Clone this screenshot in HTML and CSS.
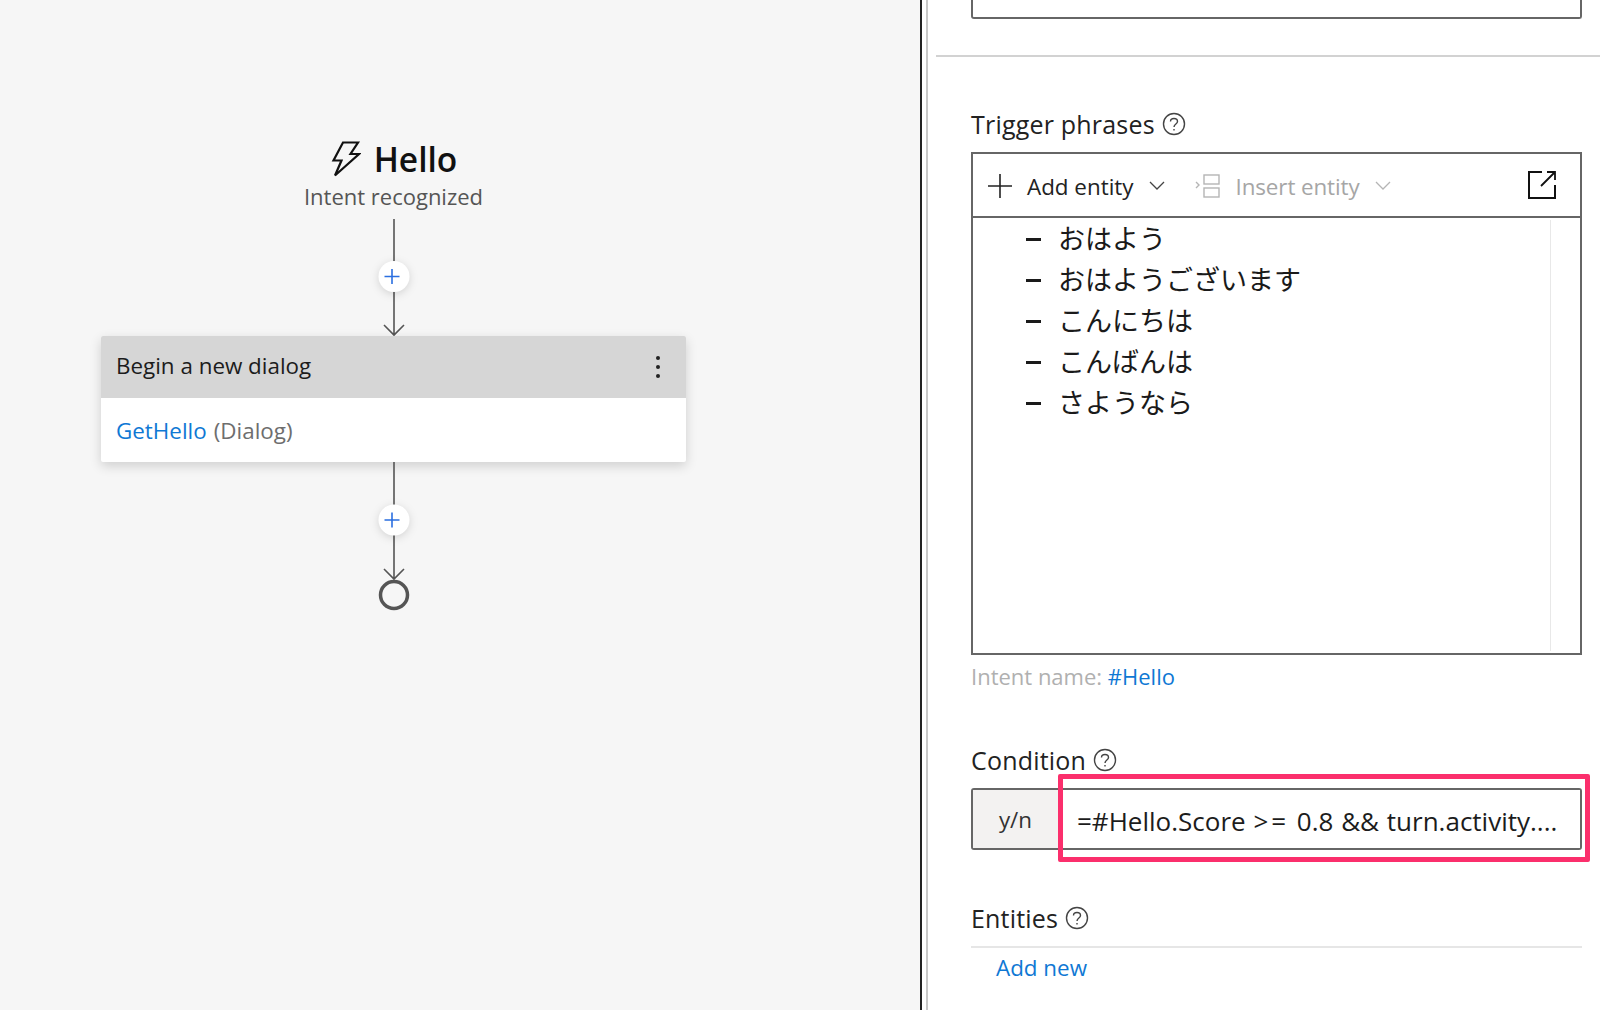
FILE: index.html
```html
<!DOCTYPE html>
<html lang="en">
<head>
<meta charset="utf-8">
<title>Trigger phrases</title>
<link rel="stylesheet" href="styles.css">
</head>
<body>
<main class="app">
  <section class="canvas">
    <div class="flow">
      <header class="trigger">
        <div class="trigger-title">
          <svg class="bolt" viewBox="0 0 30 36" width="30" height="36"><path d="M12 1.5H27L19.5 13H28L4 34.5L10.5 19.5H2.5Z" fill="none" stroke="#111" stroke-width="2.2" stroke-linejoin="miter"/></svg>
          <span>Hello</span>
        </div>
        <div class="trigger-sub">Intent recognized</div>
      </header>
      <svg class="edge edge-top" viewBox="0 0 40 117" width="40" height="117">
        <path d="M20 0V116M10 106L20 116L30 106" fill="none" stroke="#555" stroke-width="1.6"/>
        <circle class="add-dot" cx="20" cy="57.5" r="15.5" fill="#fff"/>
        <path d="M10.500 57.500H25.500M18 50V65" stroke="#2b6fe0" stroke-width="1.6"/>
      </svg>
      <article class="card">
        <div class="card-head">
          <span>Begin a new dialog</span>
          <svg viewBox="0 0 6 24" width="6" height="24"><circle cx="3" cy="3" r="2"/><circle cx="3" cy="12" r="2"/><circle cx="3" cy="21" r="2"/></svg>
        </div>
        <div class="card-body"><span class="link">GetHello</span> <span class="muted">(Dialog)</span></div>
      </article>
      <svg class="edge edge-bottom" viewBox="0 0 40 150" width="40" height="150">
        <path d="M20 0V117M10 107L20 117L30 107" fill="none" stroke="#555" stroke-width="1.6"/>
        <circle class="add-dot" cx="20" cy="58" r="15.5" fill="#fff"/>
        <path d="M10.500 58H25.500M18 50.500V65.500" stroke="#2b6fe0" stroke-width="1.6"/>
        <circle cx="20" cy="133" r="13.500" fill="none" stroke="#555" stroke-width="3.500"/>
      </svg>
    </div>
  </section>
  <div class="rule-black"></div>
  <div class="rule-gap"></div>
  <section class="panel">
    <div class="top-input"></div>
    <hr class="panel-sep">
    <div class="fields">
      <h2 class="label label-trigger">Trigger phrases
        <svg class="help" viewBox="0 0 24 24" width="24" height="24"><circle cx="12" cy="12" r="10.500"/><path d="M8.500 9.500C8.500 5.500 15.500 5.500 15.500 9.500C15.500 12 12 12 12 15M12 17V18.500"/></svg>
      </h2>
      <div class="editor">
        <div class="toolbar">
          <div class="tool">
            <svg viewBox="0 0 24 24" width="24" height="24"><path d="M0 12H24M12 0V24" stroke="#222" stroke-width="1.6"/></svg>
            <span>Add entity</span>
            <svg class="chev" viewBox="0 0 16 10" width="16" height="10"><path d="M1 1L8 8L15 1" fill="none" stroke="#444" stroke-width="1.300"/></svg>
          </div>
          <div class="tool tool-off">
            <svg viewBox="0 0 26 24" width="26" height="24" fill="none" stroke="#b5b5b5" stroke-width="1.400"><path d="M1 8L4 11L1 14"/><rect x="9" y="1" width="15" height="9"/><rect x="9" y="14" width="15" height="9"/></svg>
            <span>Insert entity</span>
            <svg class="chev" viewBox="0 0 16 10" width="16" height="10"><path d="M1 1L8 8L15 1" fill="none" stroke="#b5b5b5" stroke-width="1.300"/></svg>
          </div>
          <svg class="popout" viewBox="0 0 28 28" width="28" height="28" fill="none" stroke="#111" stroke-width="2"><path d="M14 1H1V27H27V14"/><path d="M27 9V1H19M27 1L13 15" stroke-width="1.800"/></svg>
        </div>
        <div class="phrases-wrap">
          <ul class="phrases">
            <li>おはよう</li>
            <li>おはようございます</li>
            <li>こんにちは</li>
            <li>こんばんは</li>
            <li>さようなら</li>
          </ul>
          <div class="track"></div>
        </div>
      </div>
      <p class="intent">Intent name: <span class="link">#Hello</span></p>
      <h2 class="label label-condition">Condition
        <svg class="help" viewBox="0 0 24 24" width="24" height="24"><circle cx="12" cy="12" r="10.500"/><path d="M8.500 9.500C8.500 5.500 15.500 5.500 15.500 9.500C15.500 12 12 12 12 15M12 17V18.500"/></svg>
      </h2>
      <div class="condition">
        <div class="type">y/n</div>
        <div class="expr"><span>=#Hello.Score <span class="op">&gt;=</span> 0.8 &amp;&amp; turn.activity....</span></div>
        <div class="highlight"></div>
      </div>
      <h2 class="label label-entities">Entities
        <svg class="help" viewBox="0 0 24 24" width="24" height="24"><circle cx="12" cy="12" r="10.500"/><path d="M8.500 9.500C8.500 5.500 15.500 5.500 15.500 9.500C15.500 12 12 12 12 15M12 17V18.500"/></svg>
      </h2>
      <hr class="entity-sep">
      <div class="add-new link">Add new</div>
    </div>
  </section>
</main>
</body>
</html>
```
FILE: styles.css
```css
* { box-sizing: border-box; }
html, body { margin: 0; height: 100%; }
body {
  overflow: hidden;
  background: #fff;
  color: #1f1f1f;
  font-family: "Open Sans", "Noto Sans CJK JP", sans-serif;
  font-size: 22.4px;
}
.app { display: flex; height: 1010px; }

.canvas { width: 920px; background: #f6f6f6; padding: 140px 0 0 101px; }
.flow { width: 585px; display: flex; flex-direction: column; align-items: center; }
.trigger { height: 79px; text-align: center; }
.trigger-title { display: flex; align-items: center; justify-content: center; gap: 13px; height: 37px; margin-left: 1px; font-size: 33.500px; font-weight: 600; color: #111; }
.trigger-sub { font-size: 22px; line-height: 30px; margin-top: 4px; color: #555; }
.edge { display: block; flex: none; overflow: visible; }
.add-dot { filter: drop-shadow(0 2px 4px rgba(0,0,0,.14)); }

.card { width: 585px; background: #fff; box-shadow: 0 4px 12px rgba(0,0,0,.16); border-radius: 2px; }
.card-head { height: 62px; background: #d6d6d6; display: flex; align-items: center; justify-content: space-between; padding: 0 25px 3px 15px; color: #1c1c1c; border-radius: 2px 2px 0 0; }
.card-head svg { fill: #222; margin-top: 3px; }
.card-body { height: 64px; display: flex; align-items: center; gap: 7px; padding-left: 15px; }
.link { color: #0f78d4; }
.muted { color: #6e6e6e; }

.rule-black { width: 2px; background: #222; flex: none; }
.rule-gap { width: 4px; flex: none; }
.panel { flex: 1; border-left: 2px solid #c8c8c8; min-width: 0; }
.top-input { height: 19px; margin: 0 18px 0 43px; border: 2px solid #666; border-top: 0; border-radius: 0 0 3px 3px; }
.panel-sep { margin: 36px 0 0 8px; border: 0; border-top: 2px solid #d2d2d2; }
.fields { padding: 0 18px 0 43px; }

.label { display: flex; align-items: center; gap: 7px; margin: 0; font-size: 25px; letter-spacing: .2px; font-weight: 400; line-height: 32px; color: #222; }
.help { fill: none; stroke: #444; stroke-width: 1.400; }
.label-trigger { margin-top: 51px; height: 32px; }

.editor { margin-top: 12px; height: 503px; border: 2px solid #666; display: flex; flex-direction: column; }
.toolbar { height: 64px; flex: none; display: flex; align-items: center; gap: 30px; padding: 2px 24px 0 15px; border-bottom: 2px solid #666; }
.popout { margin: -2px 0 0 auto; }
.tool { display: flex; align-items: center; gap: 15px; color: #222; }
.tool-off { color: #a6a6a6; letter-spacing: -.1px; }
.phrases-wrap { flex: 1; display: flex; min-height: 0; }
.phrases { flex: 1; list-style: none; margin: 0; padding: 0 0 0 54px; font-size: 27px; line-height: 41px; color: #1a1a1a; }
.phrases li { position: relative; height: 41px; padding-left: 31px; }
.phrases li::before { content: ""; position: absolute; left: -1px; top: 20px; width: 15px; height: 3px; background: #1a1a1a; }
.track { width: 30px; margin: 2px 0; border-left: 1px solid #e8e8e8; }

.intent { margin: 6px 0 0; font-size: 22px; line-height: 30px; color: #b0b0b0; }
.label-condition { margin-top: 53px; height: 32px; }
.condition { position: relative; margin-top: 12px; height: 62px; display: flex; border: 2px solid #666; border-radius: 3px; }
.type { width: 85px; background: #f3f2f1; display: flex; align-items: center; justify-content: center; color: #333; }
.expr { flex: 1; display: flex; align-items: center; padding: 3px 0 0 19px; font-size: 26px; word-spacing: 1px; white-space: nowrap; overflow: hidden; background: #fff; color: #1c1c1c; }
.op { letter-spacing: 3px; }
.highlight { position: absolute; left: 85px; top: -16px; width: 532px; height: 88px; border: 5px solid #fb2f6c; border-radius: 2px; }
.label-entities { margin-top: 52px; height: 32px; }
.entity-sep { margin: 12px 0 0; border: 0; border-top: 2px solid #e6e6e6; }
.add-new { margin: 5px 0 0 25px; line-height: 30px; }
```
